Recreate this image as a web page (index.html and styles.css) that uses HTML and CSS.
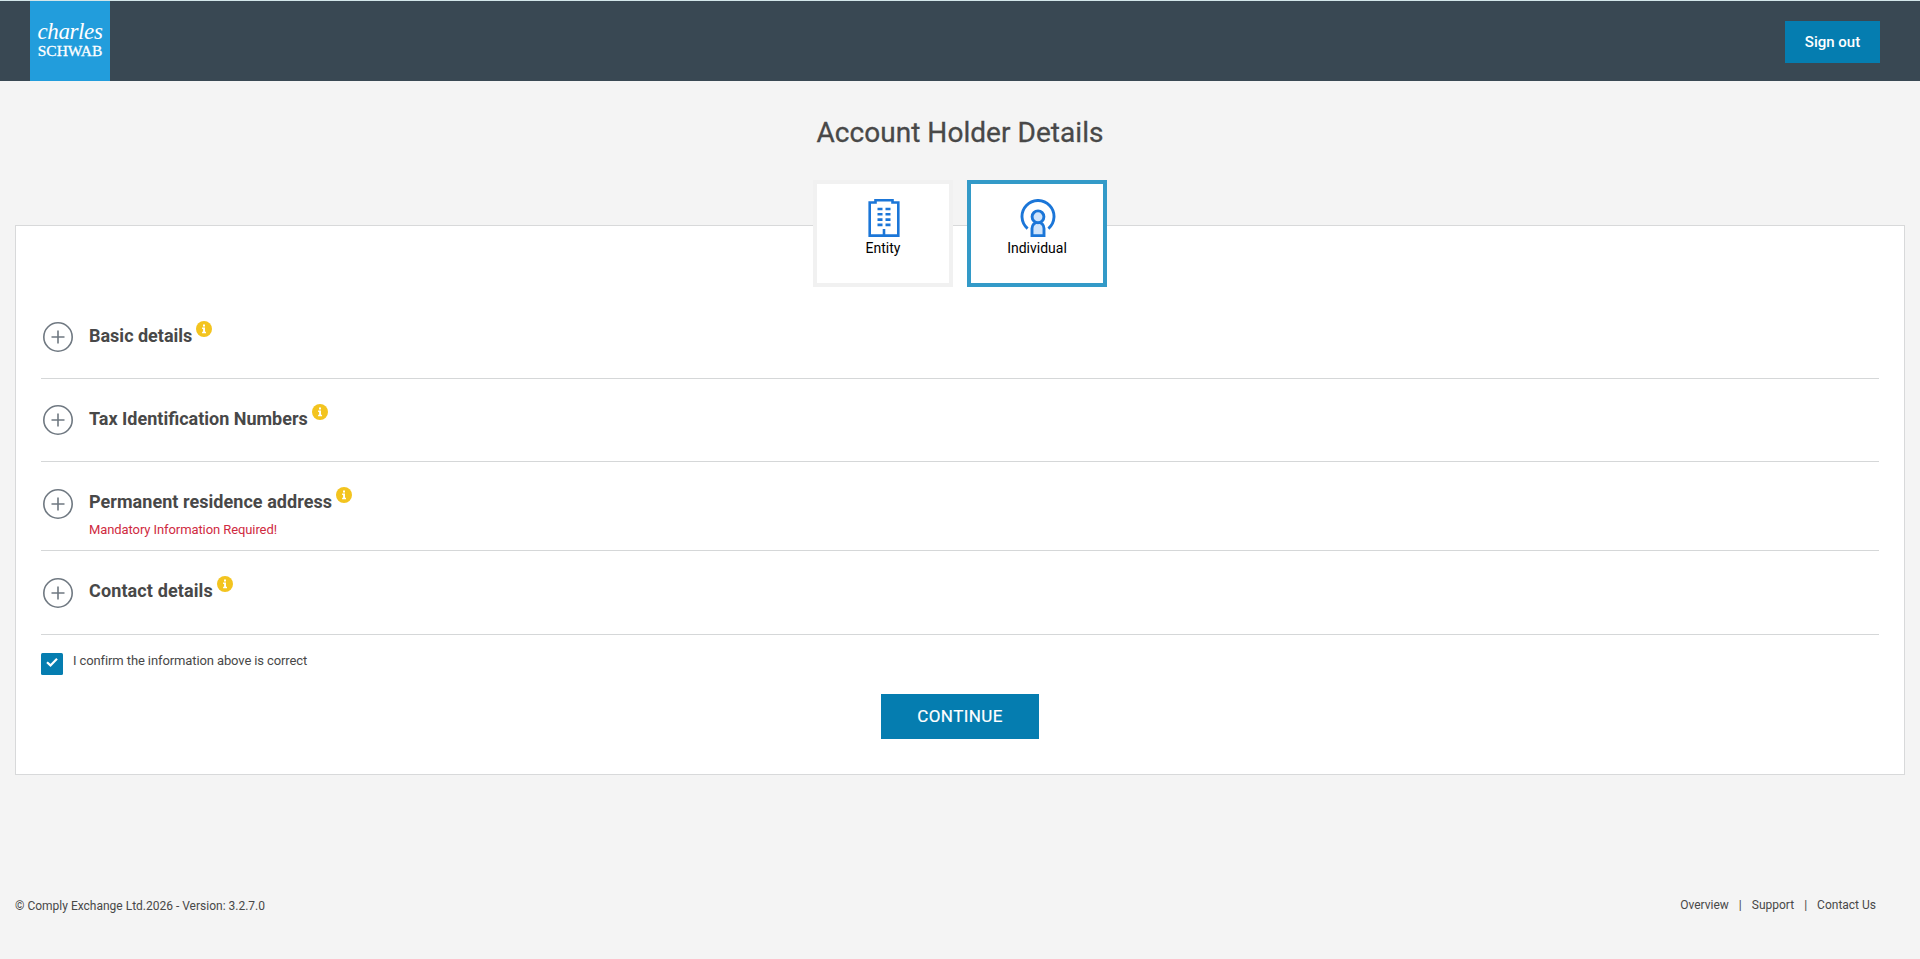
FILE: index.html
```html
<!DOCTYPE html>
<html lang="en">
<head>
    <meta charset="UTF-8">
    <meta name="viewport" content="width=device-width, initial-scale=1.0">
    <title>Account Holder Details</title>
    <link rel="stylesheet" href="styles.css">
</head>
<body>
    <header class="header">
        <a class="logo" href="#">
            <span class="logo-first">charles</span>
            <span class="logo-last">SCHWAB</span>
        </a>
        <button class="sign-out">Sign out</button>
    </header>

    <main class="main">
        <h1 class="page-title">Account Holder Details</h1>

        <div class="type-cards">
            <button class="type-card">
                <svg width="32" height="38" viewBox="0 0 32 38" fill="none" stroke="#1b76d8" stroke-width="2.6">
                    <path d="M1.7 3.5H7.5V1.3H24.5V3.5H30.3V36.6H1.7Z"/>
                    <path d="M16 30V36"/>
                    <path d="M9.5 10H14.5M17.5 10H22.5M9.5 15.3H14.5M17.5 15.3H22.5M9.5 20.6H14.5M17.5 20.6H22.5M9.5 25.9H14.5M17.5 25.9H22.5"/>
                </svg>
                <span>Entity</span>
            </button>
            <button class="type-card selected">
                <svg width="36" height="38" viewBox="0 0 36 38" fill="none" stroke="#1b76d8" stroke-width="2.9">
                    <path d="M7.6 29.6A16 16 0 1 1 28.4 29.6"/>
                    <path d="M12 36.6V29.5A6 6.3 0 0 1 24 29.5V36.6Z" fill="#cfe4fb"/>
                    <circle cx="18" cy="17.8" r="5.9" fill="#cfe4fb"/>
                </svg>
                <span>Individual</span>
            </button>
        </div>

        <div class="panel">
            <section class="row">
                <svg class="plus" viewBox="0 0 30 30"><circle cx="15" cy="15" r="14.2"/><path d="M8.5 15H21.5M15 8.5V21.5"/></svg>
                <div class="row-body">
                    <h2 class="row-title"><span>Basic details</span><svg class="info" viewBox="0 0 16 16"><circle cx="8" cy="8" r="8"/><path d="M7 3.6H9V5.5H7ZM6.1 6.6H9V10.8H10V12.2H6.1V10.8H7.1V8H6.1Z"/></svg></h2>
                </div>
            </section>
            <section class="row">
                <svg class="plus" viewBox="0 0 30 30"><circle cx="15" cy="15" r="14.2"/><path d="M8.5 15H21.5M15 8.5V21.5"/></svg>
                <div class="row-body">
                    <h2 class="row-title"><span>Tax Identification Numbers</span><svg class="info" viewBox="0 0 16 16"><circle cx="8" cy="8" r="8"/><path d="M7 3.6H9V5.5H7ZM6.1 6.6H9V10.8H10V12.2H6.1V10.8H7.1V8H6.1Z"/></svg></h2>
                </div>
            </section>
            <section class="row has-error">
                <svg class="plus" viewBox="0 0 30 30"><circle cx="15" cy="15" r="14.2"/><path d="M8.5 15H21.5M15 8.5V21.5"/></svg>
                <div class="row-body">
                    <h2 class="row-title"><span>Permanent residence address</span><svg class="info" viewBox="0 0 16 16"><circle cx="8" cy="8" r="8"/><path d="M7 3.6H9V5.5H7ZM6.1 6.6H9V10.8H10V12.2H6.1V10.8H7.1V8H6.1Z"/></svg></h2>
                    <p class="error">Mandatory Information Required!</p>
                </div>
            </section>
            <section class="row last">
                <svg class="plus" viewBox="0 0 30 30"><circle cx="15" cy="15" r="14.2"/><path d="M8.5 15H21.5M15 8.5V21.5"/></svg>
                <div class="row-body">
                    <h2 class="row-title"><span>Contact details</span><svg class="info" viewBox="0 0 16 16"><circle cx="8" cy="8" r="8"/><path d="M7 3.6H9V5.5H7ZM6.1 6.6H9V10.8H10V12.2H6.1V10.8H7.1V8H6.1Z"/></svg></h2>
                </div>
            </section>

            <div class="confirm">
                <svg class="checkbox" viewBox="0 0 22 22"><rect width="22" height="22" rx="1.5"/><path d="M6 9.2L9.5 12.4L16 5.8"/></svg>
                <span class="confirm-text">I confirm the information above is correct</span>
            </div>

            <button class="continue">CONTINUE</button>
        </div>
    </main>

    <footer class="footer">
        <span class="copyright">© Comply Exchange Ltd.2026 - Version: 3.2.7.0</span>
        <nav class="footer-links">
            <a href="#">Overview</a>
            <a href="#">Support</a>
            <a href="#">Contact Us</a>
        </nav>
    </footer>
</body>
</html>
```

FILE: styles.css
```css
* {
    box-sizing: border-box;
}
body {
    font-family: Roboto, Arial, sans-serif;
    margin: 0;
    min-height: 959px;
    background-color: #f4f4f4;
    color: #484848;
}
button {
    font-family: inherit;
    border: none;
    padding: 0;
    cursor: pointer;
}
.header {
    display: flex;
    justify-content: space-between;
    height: 81px;
    padding: 0 40px 0 30px;
    border-top: 1px solid #d3e6ea;
    background-color: #394853;
}
.logo {
    display: flex;
    flex-direction: column;
    align-items: center;
    width: 80px;
    height: 80px;
    padding-top: 21px;
    background-color: #229ddc;
    color: #fff;
    font-family: "Liberation Serif", serif;
    text-decoration: none;
    white-space: nowrap;
}
.logo-first {
    font-size: 23px;
    font-style: italic;
    line-height: 20px;
    letter-spacing: -0.4px;
}
.logo-last {
    font-size: 15.5px;
    line-height: 17px;
    -webkit-text-stroke: 0.3px #fff;
}
.sign-out {
    width: 95px;
    height: 42px;
    margin-top: 20px;
    background-color: #057db0;
    color: #fff;
    font-size: 15px;
    font-weight: 500;
}
.main {
    padding: 0 15px;
}
.page-title {
    margin: 35px 0 0;
    font-size: 28px;
    font-weight: 400;
    line-height: 34px;
    letter-spacing: 0.05px;
    text-align: center;
    -webkit-text-stroke: 0.3px #484848;
}
.type-cards {
    position: relative;
    display: flex;
    justify-content: center;
    gap: 14px;
    margin-top: 30px;
}
.type-card {
    display: flex;
    flex-direction: column;
    align-items: center;
    width: 140px;
    height: 107px;
    padding-top: 15px;
    border: 4px solid #f1f1f1;
    background-color: #fff;
    color: #000;
    font-size: 14px;
    line-height: 16px;
}
.type-card.selected {
    border-color: #339ac8;
}
.type-card svg {
    margin-left: 1px;
}
.type-card span {
    margin-top: 3px;
}
.panel {
    height: 550px;
    margin-top: -62px;
    padding: 70px 25px 0;
    border: 1px solid #d8d9da;
    background-color: #fff;
}
.row {
    display: flex;
    height: 83px;
    padding: 26px 0 0 2px;
    border-bottom: 1px solid #d5d7d8;
}
.row.has-error {
    height: 89px;
}
.row.last {
    height: 84px;
}
.plus {
    width: 30px;
    height: 30px;
    fill: none;
    stroke: #6f7881;
    stroke-width: 1.6;
}
.row.has-error .plus,
.row.last .plus {
    margin-top: 1px;
}
.row-body {
    margin-left: 16px;
}
.row-title {
    display: flex;
    align-items: flex-start;
    margin: 0;
    font-size: 18px;
    font-weight: 700;
    line-height: 28px;
    white-space: nowrap;
}
.row.has-error .row-title {
    letter-spacing: 0.05px;
}
.row.last .row-title {
    letter-spacing: 0.12px;
}
.info {
    width: 16px;
    height: 16px;
    margin: -1px 0 0 4px;
    fill: #f3c41f;
}
.info path {
    fill: #fff;
}
.error {
    margin: 5px 0 0;
    color: #cf2a41;
    font-size: 13px;
    line-height: 18px;
    letter-spacing: -0.09px;
}
.confirm {
    display: flex;
    margin-top: 18px;
}
.checkbox {
    width: 22px;
    height: 22px;
    fill: #057db0;
}
.checkbox path {
    fill: none;
    stroke: #fff;
    stroke-width: 2.2;
}
.confirm-text {
    margin-left: 10px;
    font-size: 13px;
    line-height: 16px;
    letter-spacing: -0.11px;
}
.continue {
    display: block;
    width: 158px;
    height: 45px;
    margin: 19px auto 0;
    padding-bottom: 2px;
    background-color: #057db0;
    color: #fff;
    font-size: 17px;
    letter-spacing: 0.4px;
    -webkit-text-stroke: 0.2px #fff;
}
.footer {
    display: flex;
    justify-content: space-between;
    margin-top: 122px;
    padding: 0 44px 0 15px;
    font-size: 12px;
    line-height: 18px;
}
.footer-links {
    display: flex;
    margin-top: -1px;
}
.footer-links a {
    color: inherit;
    text-decoration: none;
}
.footer-links a + a::before {
    content: "|";
    margin: 0 10px;
}
```
